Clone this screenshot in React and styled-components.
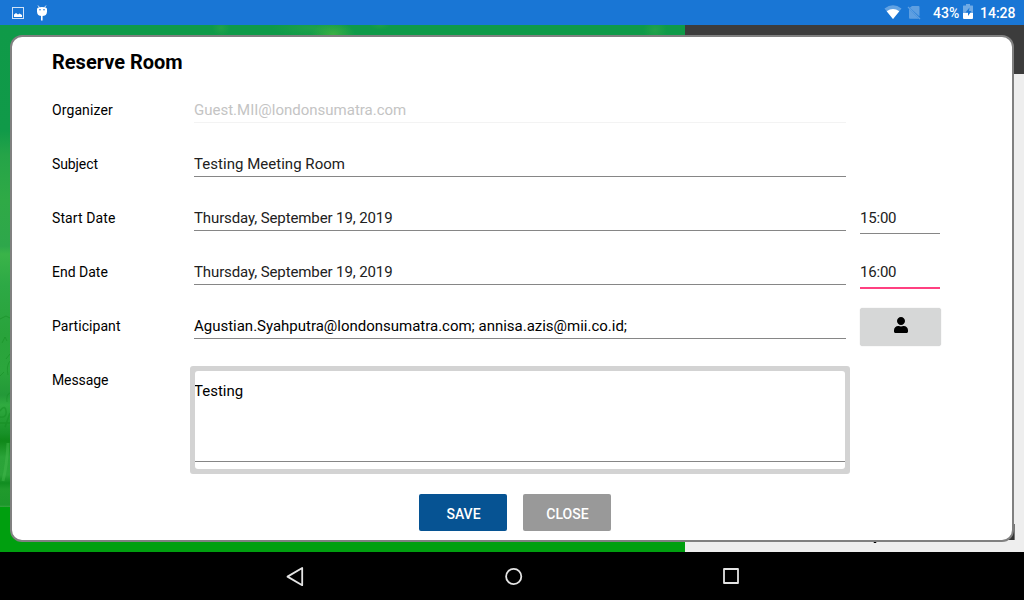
import React from 'react';
import styled, { createGlobalStyle } from 'styled-components';

const GlobalStyle = createGlobalStyle`
  * { box-sizing: border-box; }
  body { margin: 0; background: #000; font-family: Roboto, "Liberation Sans", sans-serif; }
`;

const Screen = styled.div`
  width: 1024px;
  height: 600px;
  display: flex;
  flex-direction: column;
  overflow: hidden;
`;

const StatusBar = styled.header`
  height: 25px;
  flex: none;
  display: flex;
  justify-content: space-between;
  background: #1976d5;
  color: #fff;
  svg { display: block; }
`;

const StatusText = styled.span`
  font-size: 14px;
  font-weight: 500;
  line-height: 27px;
  width: ${(p) => p.$width}px;
  white-space: nowrap;
`;

const StatusGroup = styled.div`
  display: flex;
`;

const Stage = styled.main`
  position: relative;
  height: 527px;
  flex: none;
  display: flex;
`;

const Photo = styled.section`
  width: 685px;
  display: flex;
  flex-direction: column;
`;

const Scenery = styled.div`
  height: 482px;
  background:
    radial-gradient(ellipse 22px 12px at 333px 9px, rgba(60, 176, 67, 0.95), transparent),
    radial-gradient(ellipse 40px 9px at 312px 3px, rgba(50, 170, 75, 0.45), transparent),
    radial-gradient(ellipse 9px 8px at 221px 3px, rgba(50, 170, 75, 0.5), transparent),
    radial-gradient(ellipse 10px 5px at 380px 0, rgba(50, 170, 75, 0.4), transparent),
    radial-gradient(ellipse 12px 11px at 655px 5px, rgba(50, 170, 75, 0.55), transparent),
    linear-gradient(#0f9a48 0, #109a49 105px, #25a448 130px, #2faa46 175px, #2ea74b 221px, #3ab449 229px, #2da945 260px, #29a33b 310px, #2ba63c 345px, #239938 370px, #30ab40 380px, #189128 408px, #0f8819 416px, #2aa338 432px, #2ba439 450px, #118d20 458px, #209a2c 464px, #1d972b 480px, #38a542 482px);
`;

const Reeds = styled.svg`
  display: block;
  width: 10px;
  height: 482px;
`;

const Footing = styled.div`
  flex: 1;
  background: #009f0f;
`;

const SidePanel = styled.section`
  flex: 1;
  background: #eee;
`;

const SideHeader = styled.div`
  height: 49px;
  background: #3c3c3c;
`;

const SideMarks = styled.svg`
  display: block;
  width: 339px;
  height: 478px;
`;

const Dialog = styled.form`
  position: absolute;
  left: 10px;
  top: 10px;
  width: 1004px;
  height: 507px;
  border: 2px solid #808080;
  border-radius: 12px;
  background: #fff;
  padding-left: 40px;
`;

const Title = styled.h1`
  margin: 0;
  height: 46px;
  font-size: 20px;
  font-weight: 700;
  line-height: 50px;
  color: #000;
`;

const Row = styled.div`
  display: grid;
  grid-template-columns: 128px 652px 81px;
  column-gap: 14px;
  height: ${(p) => p.$height || 54}px;
  align-items: start;
`;

const Label = styled.label`
  font-size: 14px;
  line-height: 54px;
  letter-spacing: ${(p) => p.$tracking || 0}px;
  color: #000;
`;

const Field = styled.div`
  margin-top: 14px;
  height: 26px;
  font-size: 15px;
  line-height: 26px;
  letter-spacing: ${(p) => p.$tracking || 0}px;
  white-space: nowrap;
  color: ${(p) => (p.$disabled ? '#c4c4c4' : p.$strong ? '#000' : '#212121')};
  border-bottom: 1px solid ${(p) => (p.$disabled ? '#f3f3f3' : '#868686')};
`;

const TimeField = styled(Field)`
  width: 80px;
  height: ${(p) => (p.$active ? 30 : 29)}px;
  border-bottom: ${(p) => (p.$active ? '2px solid #ff4081' : '1px solid #868686')};
`;

const PickButton = styled.button`
  width: 81px;
  height: 38px;
  margin-top: 9px;
  padding: 0;
  border: 0;
  border-radius: 3px;
  background: #d6d7d7;
  box-shadow: 0 0 1px rgba(0, 0, 0, 0.25);
  display: flex;
  align-items: center;
  justify-content: center;
  svg { margin-top: -4px; }
`;

const MessageFrame = styled.div`
  width: 660px;
  height: 108px;
  margin: 13px 0 0 -4px;
  border: 5px solid #d3d3d3;
  border-radius: 3px;
  background: #d3d3d3;
`;

const MessageInner = styled.div`
  height: 98px;
  border-radius: 3px;
  overflow: hidden;
  background: #fff;
`;

const MessageText = styled.div`
  height: 91px;
  border-bottom: 1px solid #868686;
  font-size: 15px;
  line-height: 41px;
  text-indent: -1px;
  color: #000;
`;

const Actions = styled.div`
  display: flex;
  gap: 16px;
  margin: 20px 0 0 367px;
`;

const ActionButton = styled.button`
  width: 88px;
  height: 37px;
  padding: 3px 0 0 1px;
  border: 0;
  border-radius: 2px;
  font: 500 14px Roboto, sans-serif;
  color: #fff;
  background: ${(p) => (p.$primary ? '#065393' : '#999')};
`;

const NavBar = styled.nav`
  height: 48px;
  flex: none;
  display: flex;
  padding-left: 284px;
  gap: 194.5px;
  background: #000;
  svg { display: block; margin-top: 12px; }
`;

const StatusLeftIcons = () => (
  <svg width="60" height="25" fill="none">
    <rect x="12.5" y="7.5" width="11" height="11" stroke="#fff" strokeOpacity=".8" />
    <path d="M14 17v-2.500l2-1.500 2 1.500 1.500-1 2.500 1.500V17z" fill="#fff" />
    <path d="M38 5.500l1.500 2M46 5.500l-1.500 2" stroke="#fff" strokeOpacity=".8" />
    <path d="M37 9q0-2 5-2t5 2v2.500q0 4.500-5 4.500t-5-4.500z" fill="#fff" />
    <path d="M41.800 15v5.500" stroke="#fff" strokeWidth="1.600" />
    <circle cx="40" cy="9.700" r=".8" fill="#1976d5" />
    <circle cx="44" cy="9.700" r=".8" fill="#1976d5" />
  </svg>
);

const SignalIcons = () => (
  <svg width="49" height="25">
    <path d="M.5 8.500Q9 2 17.500 8.500L9 19z" fill="#fff" fillOpacity=".32" />
    <path d="M2.700 11.300Q9 6.600 15.300 11.300L9 19z" fill="#fff" />
    <path d="M28 6h6.500q1 0 1 1v9.500L25.800 7.800zM25 9l9.700 9.700H26q-1 0-1-1z" fill="#fff" fillOpacity=".3" />
    <path d="M24 7l12 12" stroke="#fff" strokeOpacity=".3" strokeWidth="1.200" />
  </svg>
);

const BatteryIcon = () => (
  <svg width="18" height="25">
    <path d="M4 4h4v1.500h2.500q.5 0 .5.500v7H1V6q0-.5.5-.5H4z" fill="#fff" fillOpacity=".38" />
    <path d="M1 13h10v5q0 1-1 1H2q-1 0-1-1z" fill="#fff" />
    <path d="M7.500 7.500L3.500 12.500H6v3.500l3.500-5H7z" fill="#1976d5" />
  </svg>
);

const PersonIcon = () => (
  <svg width="14" height="16" viewBox="0 0 448 512">
    <path d="M224 256c70.700 0 128-57.300 128-128S294.700 0 224 0 96 57.300 96 128s57.300 128 128 128zm89.600 32h-16.700c-22.200 10.200-46.900 16-72.900 16s-50.600-5.800-72.900-16h-16.700C60.200 288 0 348.200 0 422.400V464c0 26.500 21.500 48 48 48h352c26.500 0 48-21.500 48-48v-41.600c0-74.200-60.200-134.400-134.400-134.400z" />
  </svg>
);

const NavIcon = ({ children }) => (
  <svg width="24" height="24" fill="none" stroke="#e4e4e4" strokeWidth="1.800" strokeLinejoin="round">
    {children}
  </svg>
);

export default function App() {
  return (
    <Screen>
      <GlobalStyle />
      <StatusBar>
        <StatusLeftIcons />
        <StatusGroup>
          <SignalIcons />
          <StatusText $width={29}>43%</StatusText>
          <BatteryIcon />
          <StatusText $width={44}>14:28</StatusText>
        </StatusGroup>
      </StatusBar>
      <Stage>
        <Photo>
          <Scenery>
            <Reeds fill="none" stroke="#118a20" strokeOpacity=".45">
              <path d="M0 294l6-3 4 2M2 318l3-6 2 4M6 334l4-5M0 351l4-4M8 350q-2-9 2-14M7 377q-1-8 3-9" />
              <path d="M0 386q5-7 6 0t-6 6M5 402l5-14M0 398h10" strokeWidth="1.500" />
              <path d="M8 418Q7 440 3 456" stroke="#48bb50" strokeWidth="3" />
            </Reeds>
          </Scenery>
          <Footing />
        </Photo>
        <SidePanel>
          <SideHeader />
          <SideMarks>
            <path d="M188 467h4l-1 2h-2z" fill="#000" />
            <path d="M320 450h9v16h-9z" fill="#333" />
            <path d="M329 450h1v16h-1z" fill="#777" />
          </SideMarks>
        </SidePanel>
        <Dialog>
          <Title>Reserve Room</Title>
          <Row>
            <Label $tracking={0.1}>Organizer</Label>
            <Field $disabled>Guest.MII@londonsumatra.com</Field>
          </Row>
          <Row>
            <Label $tracking={-0.1}>Subject</Label>
            <Field $tracking={0.03}>Testing Meeting Room</Field>
          </Row>
          <Row>
            <Label $tracking={0.1}>Start Date</Label>
            <Field $tracking={-0.11}>Thursday, September 19, 2019</Field>
            <TimeField $tracking={-0.2}>15:00</TimeField>
          </Row>
          <Row>
            <Label>End Date</Label>
            <Field $tracking={-0.11}>Thursday, September 19, 2019</Field>
            <TimeField $active $tracking={-0.2}>16:00</TimeField>
          </Row>
          <Row>
            <Label $tracking={0.05}>Participant</Label>
            <Field $strong $tracking={-0.01}>Agustian.Syahputra@londonsumatra.com; annisa.azis@mii.co.id;</Field>
            <PickButton type="button" aria-label="Pick participants"><PersonIcon /></PickButton>
          </Row>
          <Row $height={121}>
            <Label $tracking={-0.1}>Message</Label>
            <MessageFrame>
              <MessageInner>
                <MessageText>Testing</MessageText>
              </MessageInner>
            </MessageFrame>
          </Row>
          <Actions>
            <ActionButton type="button" $primary>SAVE</ActionButton>
            <ActionButton type="button">CLOSE</ActionButton>
          </Actions>
        </Dialog>
      </Stage>
      <NavBar>
        <NavIcon><path d="M18.200 4v17.200L3.500 12.600z" /></NavIcon>
        <NavIcon><circle cx="10.700" cy="12.500" r="7.600" /></NavIcon>
        <NavIcon><rect x="3" y="5" width="14" height="14" /></NavIcon>
      </NavBar>
    </Screen>
  );
}
